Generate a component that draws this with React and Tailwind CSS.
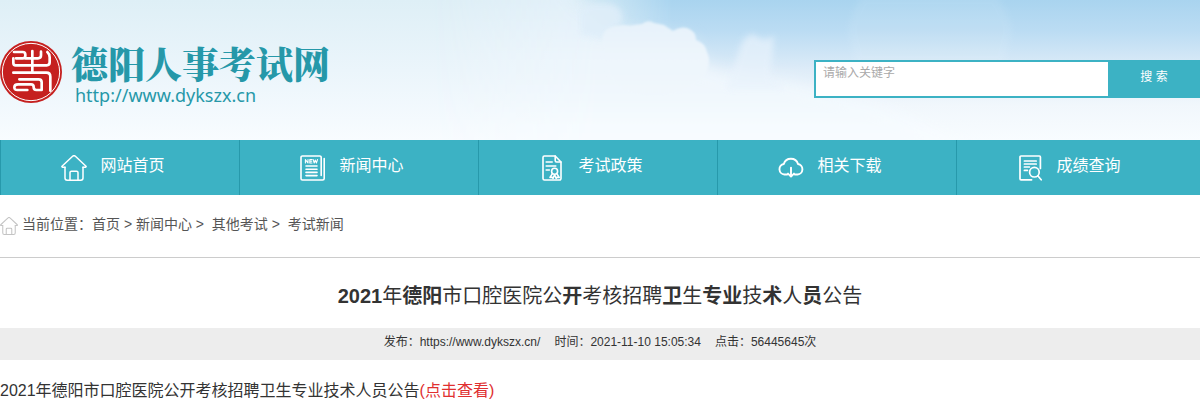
const navItems = [
    {label: "网站首页", Icon: HomeIcon},
    {label: "新闻中心", Icon: NewsIcon},
    {label: "考试政策", Icon: PolicyIcon},
    {label: "相关下载", Icon: DownloadIcon},
    {label: "成绩查询", Icon: ScoreIcon},
]

// the heading mixes two weights, character by character
const titleParts = [
    {text: "2021", bold: true},
    {text: "年"},
    {text: "德阳", bold: true},
    {text: "市口腔医院公"},
    {text: "开", bold: true},
    {text: "考核招聘"},
    {text: "卫", bold: true},
    {text: "生"},
    {text: "专业", bold: true},
    {text: "技"},
    {text: "术", bold: true},
    {text: "人"},
    {text: "员", bold: true},
    {text: "公告"},
]

function HomeIcon({className = "h-[26px] w-[26px]"}) {
    return (
        <svg viewBox="0 0 26 26" className={className} fill="none" stroke="currentColor" strokeWidth="1.5"
             strokeLinecap="round" strokeLinejoin="round" aria-hidden="true">
            <path d="M4 12.2H1.4a.6.6 0 0 1-.4-1L11.6 1.3a2 2 0 0 1 2.8 0L25 11.2a.6.6 0 0 1-.4 1H22"/>
            <path d="M4 12.2V23a2.2 2.2 0 0 0 2.2 2.2h13.6A2.2 2.2 0 0 0 22 23V12.2"/>
            <path d="M9 25v-7.4a1.4 1.4 0 0 1 1.4-1.4h5.2a1.4 1.4 0 0 1 1.4 1.4V25"/>
        </svg>
    )
}

function NewsIcon() {
    return (
        <svg viewBox="0 0 26 26" className="h-[26px] w-[26px]" fill="none" stroke="currentColor" strokeWidth="1.6"
             strokeLinecap="round" strokeLinejoin="round" aria-hidden="true">
            <path d="M21.2 20.5V2.4a1.4 1.4 0 0 0-1.4-1.4H2.4A1.4 1.4 0 0 0 1 2.4v21.2A1.4 1.4 0 0 0 2.4 25h20.2a1.6 1.6 0 0 0 1.6-1.6V3.6"/>
            <path d="M6 11h11M6 14.2h11M6 17.4h11M6 20.6h11"/>
            <path strokeWidth="1.1" d="M5.4 8V4.6L8 8V4.6M12 4.6H9.8V8H12M9.8 6.3h1.9M13.2 4.6l1 3.4 1.1-3 1.1 3 1.1-3.4"/>
        </svg>
    )
}

function PolicyIcon() {
    return (
        <svg viewBox="0 0 26 26" className="h-[26px] w-[26px]" fill="none" stroke="currentColor" strokeWidth="1.6"
             strokeLinecap="round" strokeLinejoin="round" aria-hidden="true">
            <path d="M16.2 1H5.4A1.4 1.4 0 0 0 4 2.4v21.2A1.4 1.4 0 0 0 5.4 25h15.2a1.4 1.4 0 0 0 1.4-1.4V7z"/>
            <path d="M16.2 1v4.6A1.4 1.4 0 0 0 17.6 7H22"/>
            <path d="M7.2 7h6M7.2 11h9.6M7.2 15h3.2"/>
            <circle cx="15.6" cy="16.2" r="3"/>
            <path d="M13.4 18.6 11 22.4l2.2-.2.8 1.2 1.6-3.6 1.6 3.6.8-1.2 2.2.2-2.4-3.8"/>
        </svg>
    )
}

function DownloadIcon() {
    return (
        <svg viewBox="0 0 26 26" className="h-[26px] w-[26px]" fill="none" stroke="currentColor" strokeWidth="1.9"
             strokeLinecap="round" strokeLinejoin="round" aria-hidden="true">
            <path d="M9.2 19.5H6.4a5.3 5.3 0 0 1-.6-10.5 7.4 7.4 0 0 1 14.2 0 5.3 5.3 0 0 1-.4 10.5h-2.8"/>
            <path d="M13 12.6v8.6M10 18.6l3 3 3-3"/>
        </svg>
    )
}

function ScoreIcon() {
    return (
        <svg viewBox="0 0 26 26" className="h-[26px] w-[26px]" fill="none" stroke="currentColor" strokeWidth="1.7"
             strokeLinecap="round" strokeLinejoin="round" aria-hidden="true">
            <path d="M14.6 24.8H4a1 1 0 0 1-1-1V2a1 1 0 0 1 1-1h18.4a1 1 0 0 1 1 1v11.4"/>
            <path d="M7.4 6h11.8M7.4 9h11.8M7.4 12h5M7.4 15.4h3"/>
            <circle cx="17.4" cy="17.2" r="4.8"/>
            <path d="m20.8 20.8 3.4 4"/>
        </svg>
    )
}

function Seal() {
    return (
        <svg viewBox="0 0 186 186" className="h-[62px] w-[62px] shrink-0" fill="none" aria-hidden="true">
            <circle cx="93" cy="93" r="93" fill="#c5201f"/>
            <circle cx="93" cy="93" r="86" stroke="#fff" strokeWidth="3"/>
            <g stroke="#fff" strokeWidth="8" strokeLinecap="round" strokeLinejoin="round">
                <path d="M42 33h26q8 0 8 8v3q0 8-8 8H48"/>
                <path d="M76 52h38q9 0 9-9V32"/>
                <path d="M97 30v65"/>
                <path d="M40 52v14q0 7 7 7h93q9 0 9-9V49q0-10-7-16"/>
                <path d="M40 95h99q12 0 12 12v42"/>
                <path d="M58 115h58q9 0 9 9v23h-16q-8 0-8-8v-1q0-8-8-8H54q-11 0-11 9t11 8h28"/>
            </g>
        </svg>
    )
}

function Sky() {
    return (
        <svg viewBox="0 0 1200 140" preserveAspectRatio="none" className="absolute inset-0 h-full w-full"
             aria-hidden="true">
            <defs>
                <linearGradient id="sky-base" x1="0" y1="0" x2="0" y2="1">
                    <stop offset="0" stopColor="#deeff6"/>
                    <stop offset="0.5" stopColor="#ebf5fb"/>
                    <stop offset="1" stopColor="#f8fcff"/>
                </linearGradient>
                <linearGradient id="sky-blue" x1="0" y1="0" x2="0" y2="1">
                    <stop offset="0" stopColor="#a9d4ef"/>
                    <stop offset="0.22" stopColor="#bbdcf3"/>
                    <stop offset="0.5" stopColor="#deecf8"/>
                    <stop offset="0.75" stopColor="#f1f7fc"/>
                    <stop offset="1" stopColor="#f8fcff"/>
                </linearGradient>
                <linearGradient id="sky-fade" x1="0" y1="0" x2="1" y2="0">
                    <stop offset="0.47" stopColor="#000"/>
                    <stop offset="0.56" stopColor="#fff"/>
                </linearGradient>
                <linearGradient id="haze-fade" x1="0" y1="0" x2="1" y2="0">
                    <stop offset="0.36" stopColor="#000"/>
                    <stop offset="0.5" stopColor="#fff"/>
                </linearGradient>
                <linearGradient id="sky-cloud" gradientUnits="userSpaceOnUse" x1="0" y1="0" x2="0" y2="140">
                    <stop offset="0" stopColor="#e2f0f9"/>
                    <stop offset="0.4" stopColor="#edf5fc"/>
                    <stop offset="0.7" stopColor="#f1f8fd"/>
                    <stop offset="1" stopColor="#f8fcff"/>
                </linearGradient>
                <mask id="sky-mask">
                    <rect width="1200" height="140" fill="url(#sky-fade)"/>
                </mask>
                <mask id="haze-mask" maskUnits="userSpaceOnUse" x="0" y="0" width="1200" height="140">
                    <rect width="1200" height="140" fill="url(#haze-fade)"/>
                </mask>
                <filter id="sky-soft" x="-20%" y="-20%" width="140%" height="140%">
                    <feGaussianBlur stdDeviation="8"/>
                </filter>
                <filter id="sky-wisp" x="-20%" y="-20%" width="140%" height="140%">
                    <feGaussianBlur stdDeviation="3"/>
                </filter>
                <filter id="sky-edge" x="-10%" y="-10%" width="120%" height="120%">
                    <feGaussianBlur stdDeviation="1"/>
                </filter>
            </defs>
            <rect width="1200" height="140" fill="url(#sky-base)"/>
            <rect width="1200" height="140" fill="url(#sky-blue)" mask="url(#sky-mask)"/>
            {/* haze that the clouds rise from */}
            <g mask="url(#haze-mask)">
                <path filter="url(#sky-soft)" fill="url(#sky-cloud)"
                      d="M380-30H560L574-4 606 30 690 40 704 66 740 76 790 82 880 104 1000 160H380z"/>
            </g>
            <path filter="url(#sky-wisp)" fill="#dfeef9" opacity="0.9"
                  d="M580 10q8-8 20-6 14-2 20 6 6 10-2 16-10 4-16 14l-22-6z"/>
            <path filter="url(#sky-edge)" fill="url(#sky-cloud)"
                  d="M603 36q2-8 12-10l9-1q6 1 10 0l8-1q6-5 12-1l10 2q6 4 9 6 7-5 14-3 9 3 9 12 9 3 11 12 4 9 0 18-6 14-22 22-40 14-70-6-16-24-12-50z"/>
            <path filter="url(#sky-wisp)" fill="#e9f3fc" opacity="0.7"
                  d="M740 48q2-10 12-14 8 4 12 6l10-4-1 14-3 26 16 14h-60z"/>
            <path filter="url(#sky-wisp)" fill="#fff" opacity="0.08"
                  d="M848 30q4-20 14-34h134q12 14 16 34l-8 34H856z"/>
        </svg>
    )
}

function Header() {
    return (
        <header className="relative overflow-hidden">
            <Sky/>
            <div className="relative flex items-start justify-between pt-10 pb-9">
                <a href="#" className="flex items-center gap-[9px] text-[#2698a9]">
                    <Seal/>
                    <span className="flex flex-col">
                        <span className="font-['Noto_Serif_CJK_SC','Noto_Sans_CJK_SC',serif] text-[37px] leading-[46px] font-black">
                            德阳人事考试网
                        </span>
                        <span className="pl-1 font-['Noto_Sans',sans-serif] text-[18px] leading-[18px]">
                            http://www.dykszx.cn
                        </span>
                    </span>
                </a>
                <form className="mt-5 flex h-[38px] w-[386px] border-2 border-r-0 border-[#3cb2c4] text-xs"
                      onSubmit={(e) => e.preventDefault()}>
                    <input
                        type="text"
                        aria-label="请输入关键字"
                        placeholder="请输入关键字"
                        className="min-w-0 flex-1 bg-white px-[7px] pb-3 text-[#333] outline-none placeholder:text-[#a9a9a9]"
                    />
                    <button type="submit" className="w-[92px] bg-[#3cb2c4] pb-1 text-white">搜 索</button>
                </form>
            </div>
        </header>
    )
}

export default function App() {
    return (
        <div className="bg-white font-['Liberation_Sans','Noto_Sans_CJK_SC',sans-serif] text-[#333]">
            <Header/>

            <nav className="bg-[#3cb2c4] pr-[5px]">
                <ul className="flex">
                    {navItems.map(({label, Icon}) => (
                        <li key={label} className="flex-1 border-l border-[#2799ab]">
                            <a href="#" className="flex h-[55px] items-center gap-[14px] pl-[25%] text-base text-white">
                                <Icon/>
                                <span className="pb-1">{label}</span>
                            </a>
                        </li>
                    ))}
                </ul>
            </nav>

            <div className="flex h-[63px] items-center gap-1 border-b border-[#ccc] text-sm text-[#555]">
                <span className="text-[#c4c4c4]"><HomeIcon className="h-[18px] w-[18px]"/></span>
                <p className="pb-1">
                    当前位置：<a href="#">首页</a> &gt; <a href="#">新闻中心</a> &gt;&nbsp; <a href="#">其他考试</a> &gt;&nbsp; <a
                    href="#">考试新闻</a>
                </p>
            </div>

            <main>
                <h1 className="pt-[23px] pb-[17px] text-center text-xl leading-[30px]">
                    {titleParts.map(({text, bold}) => (
                        <span key={text} className={bold ? "font-bold" : "font-normal"}>{text}</span>
                    ))}
                </h1>
                <div className="flex h-8 justify-center gap-[14px] bg-[#ededed] text-xs leading-7">
                    <span>发布：https://www.dykszx.cn/</span>
                    <span>时间：2021-11-10 15:05:34</span>
                    <span>点击：56445645次</span>
                </div>
                <p className="pt-5 text-base leading-[22px]">
                    2021年德阳市口腔医院公开考核招聘卫生专业技术人员公告<a href="#" className="text-[#e03030]">(点击查看)</a>
                </p>
            </main>
        </div>
    )
}
